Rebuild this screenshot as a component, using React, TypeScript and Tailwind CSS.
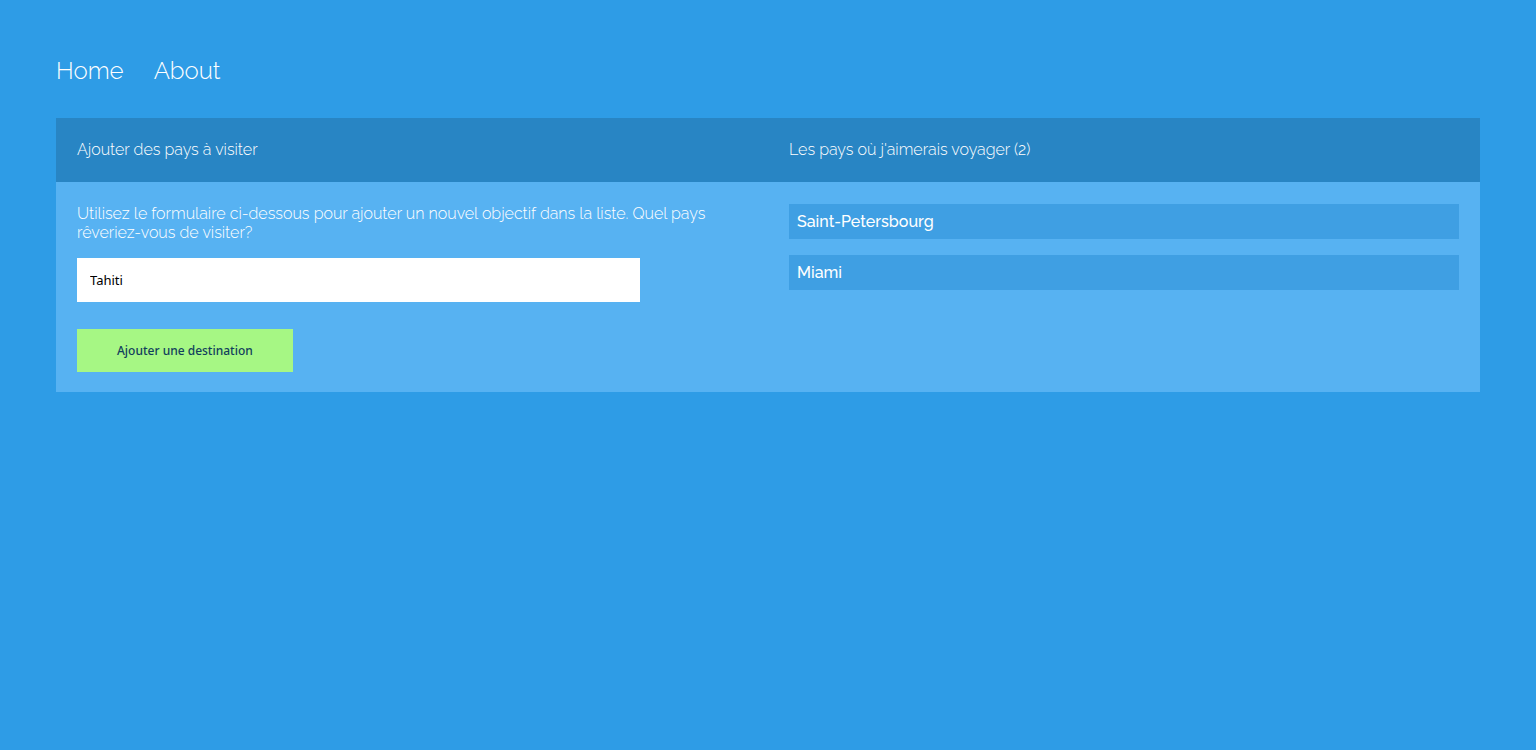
import { useState, type FormEvent } from "react";

const initialCountries = ["Saint-Petersbourg", "Miami"];

export default function App() {
  const [countries, setCountries] = useState(initialCountries);
  const [name, setName] = useState("Tahiti");

  const addCountry = (event: FormEvent) => {
    event.preventDefault();
    if (!name.trim()) return;
    setCountries([...countries, name.trim()]);
    setName("");
  };

  return (
    <div className="min-h-screen bg-[#2e9ce6] px-14 pt-[57px] pb-14 font-['Raleway','Lato',sans-serif] text-base leading-[19px] font-light text-white">
      <nav className="flex gap-[30px] text-2xl leading-7">
        <a href="#home">Home</a>
        <a href="#about">About</a>
      </nav>

      <main className="mt-[33px] grid grid-cols-2 bg-[#57b2f2]">
        <h2 className="bg-[#2885c4] px-[21px] pt-[22px] pb-[23px]">Ajouter des pays à visiter</h2>
        <h2 className="bg-[#2885c4] px-[21px] pt-[22px] pb-[23px]">
          Les pays où j'aimerais voyager ({countries.length})
        </h2>

        <form onSubmit={addCountry} className="px-[21px] pt-[22px] pb-5">
          <label htmlFor="country" className="block">
            Utilisez le formulaire ci-dessous pour ajouter un nouvel objectif dans la liste. Quel pays rêveriez-vous de
            visiter?
          </label>
          <input
            id="country"
            type="text"
            value={name}
            onChange={(event) => setName(event.target.value)}
            className="mt-4 block h-11 w-[84%] bg-white px-[13px] font-['Noto_Sans',sans-serif] text-[13px] font-normal text-black outline-none"
          />
          <button
            type="submit"
            className="mt-[27px] block h-[43px] bg-[#a6f784] px-10 font-['Noto_Sans',sans-serif] text-xs font-medium text-[#12405c]"
          >
            Ajouter une destination
          </button>
        </form>

        <ul className="flex flex-col gap-4 px-[21px] pt-[22px] pb-5 font-medium">
          {countries.map((country) => (
            <li key={country} className="bg-[#3f9fe3] p-2">
              {country}
            </li>
          ))}
        </ul>
      </main>
    </div>
  );
}
